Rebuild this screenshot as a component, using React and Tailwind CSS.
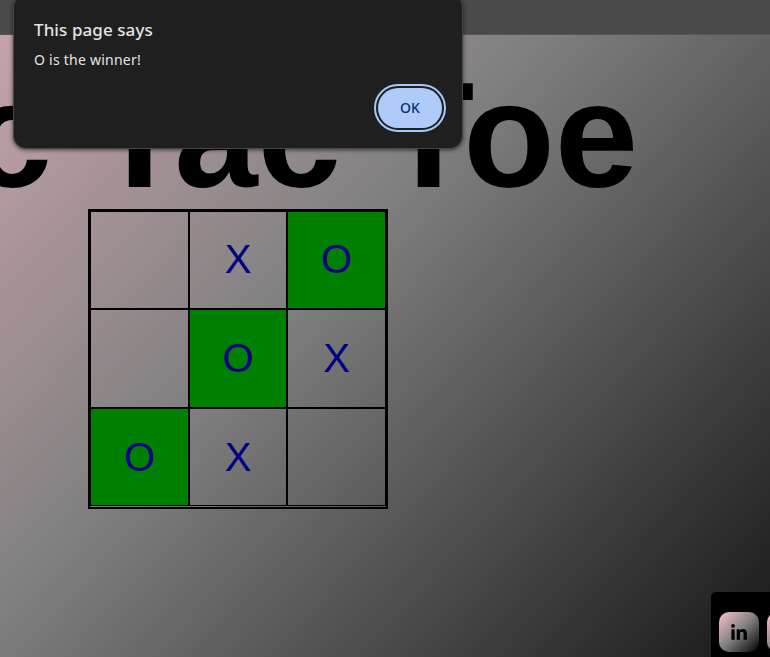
import { FaLinkedinIn, FaGithub } from "react-icons/fa";

const cells = ["", "X", "O", "", "O", "X", "O", "X", ""];

function Board() {
  return (
    <div className="ml-[88px] mt-[-1px] grid h-[300px] w-[300px] grid-cols-[99px_98px_99px] grid-rows-[98px_99px_98px] border-2 border-black">
      {cells.map((mark, i) => (
        <button
          key={i}
          className={`flex items-center justify-center border border-black text-[40px] leading-none text-[#000080] ${
            i > 5 ? "pb-0" : "pb-[2px]"
          } ${mark === "O" ? "bg-[#008000]" : ""}`}
        >
          {mark}
        </button>
      ))}
    </div>
  );
}

function WinnerDialog() {
  return (
    <div className="absolute left-[13px] top-[-6px] h-[155px] w-[450px] rounded-[13px] border border-[#474747] bg-[#1f1f1f] pl-5 pt-[23px] font-['Noto_Sans',sans-serif] text-[#e3e3e3] shadow-[0_1px_4px_rgba(0,0,0,0.6)]">
      <h2 className="text-[17px] font-medium leading-6 tracking-[0.08px]">This page says</h2>
      <p className="mt-2 text-[14px] leading-5 tracking-[0.24px]">O is the winner!</p>
      <div className="mr-5 mt-[18px] flex justify-end">
        <button className="h-10 w-16 rounded-[20px] bg-[#aecbfa] pb-[2px] text-[14px] font-medium text-[#062e6f] outline-2 outline-offset-2 outline-[#a8c7fa]">
          OK
        </button>
      </div>
    </div>
  );
}

export default function App() {
  return (
    <div className="relative flex h-[657px] w-[770px] flex-col overflow-hidden font-['Liberation_Sans',sans-serif]">
      <header className="h-[35px] shrink-0 border-b border-[#565656] bg-[#4a4a4a]">
        <div className="h-[18px] border-b border-[#474747]" />
      </header>
      <main className="min-h-0 flex-1 overflow-hidden bg-[linear-gradient(133deg,#ffc0cb_-330px,#808080_392px,#000000_1125px)]">
        <h1 className="-ml-[162px] mt-[25px] whitespace-nowrap text-[150px] font-bold leading-none text-black">
          Tic Tac Toe
        </h1>
        <Board />
      </main>
      <footer className="absolute bottom-0 left-[711px] flex h-[65px] w-[110px] gap-2 rounded-tl-[5px] bg-black pl-2 pt-5">
        <a className="flex h-10 w-10 shrink-0 items-center justify-center rounded-[10px] bg-[linear-gradient(135deg,#ffc0cb,#808080,#000000)] pt-px text-black">
          <FaLinkedinIn size={18} />
        </a>
        <a className="flex h-10 w-10 shrink-0 items-center justify-center rounded-[10px] bg-[linear-gradient(135deg,#ffc0cb,#808080,#000000)] text-black">
          <FaGithub size={18} />
        </a>
      </footer>
      <WinnerDialog />
    </div>
  );
}
